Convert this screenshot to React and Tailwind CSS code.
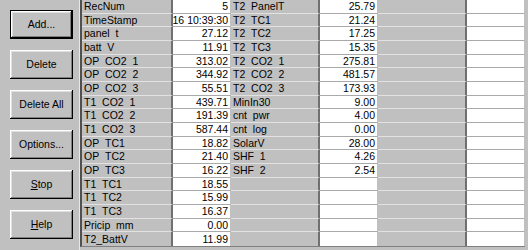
const rows = [
  ['RecNum', '5', 'T2_PanelT', '25.79'],
  ['TimeStamp', '16 10:39:30', 'T2_TC1', '21.24'],
  ['panel_t', '27.12', 'T2_TC2', '17.25'],
  ['batt_V', '11.91', 'T2_TC3', '15.35'],
  ['OP_CO2_1', '313.02', 'T2_CO2_1', '275.81'],
  ['OP_CO2_2', '344.92', 'T2_CO2_2', '481.57'],
  ['OP_CO2_3', '55.51', 'T2_CO2_3', '173.93'],
  ['T1_CO2_1', '439.71', 'MinIn30', '9.00'],
  ['T1_CO2_2', '191.39', 'cnt_pwr', '4.00'],
  ['T1_CO2_3', '587.44', 'cnt_log', '0.00'],
  ['OP_TC1', '18.82', 'SolarV', '28.00'],
  ['OP_TC2', '21.40', 'SHF_1', '4.26'],
  ['OP_TC3', '16.22', 'SHF_2', '2.54'],
  ['T1_TC1', '18.55', '', ''],
  ['T1_TC2', '15.99', '', ''],
  ['T1_TC3', '16.37', '', ''],
  ['Pricip_mm', '0.00', '', ''],
  ['T2_BattV', '11.99', '', ''],
]

const buttons = [
  { label: 'Add...', isDefault: true },
  { label: 'Delete' },
  { label: 'Delete All' },
  { label: 'Options...' },
  { label: 'Stop', key: 'S' },
  { label: 'Help', key: 'H' },
]

// underscores sit under the row line in the original grid, so they only show in the last row
function FieldName({ text, last }) {
  const parts = text.split('_')
  return parts.map((p, i) => (
    <span key={i}>
      {i > 0 && <span className={last ? '' : 'text-transparent'}>_</span>}
      {p}
    </span>
  ))
}

function LabelCell({ text, last }) {
  return (
    <div
      className={`flex items-center overflow-hidden whitespace-nowrap bg-[#c0c0c0] pl-[2px] border-r-2 border-r-[#707070] ${
        last ? '' : 'border-b border-b-[#e2e2e2]'
      }`}
    >
      {text && <FieldName text={text} last={last} />}
    </div>
  )
}

function ValueCell({ text, last }) {
  return (
    <div
      className={`flex items-center justify-end overflow-hidden whitespace-nowrap bg-white pr-[2px] border-r border-r-[#c0c0c0] ${
        last ? '' : 'border-b border-b-[#a9a9a9]'
      }`}
    >
      {text}
    </div>
  )
}

function WinButton({ label, isDefault, hotkey }) {
  const idx = hotkey ? label.indexOf(hotkey) : -1
  return (
    <button
      className={`w-[63px] h-[29px] bg-[#c0c0c0] text-black ${
        isDefault
          ? 'border border-black shadow-[inset_-1px_-1px_0_#000,inset_1px_1px_0_#fff,inset_-2px_-2px_0_#808080,inset_2px_2px_0_#dfdfdf]'
          : 'shadow-[inset_-1px_-1px_0_#000,inset_1px_1px_0_#fff,inset_-2px_-2px_0_#808080,inset_2px_2px_0_#dfdfdf]'
      }`}
    >
      {idx >= 0 ? (
        <>
          {label.slice(0, idx)}
          <span className="underline">{label[idx]}</span>
          {label.slice(idx + 1)}
        </>
      ) : (
        label
      )}
    </button>
  )
}

export default function App() {
  return (
    <div
      className="w-[528px] h-[250px] bg-[#c0c0c0] flex text-[10.5px] leading-none text-black overflow-hidden"
      style={{ fontFamily: '"Liberation Sans", Arial, sans-serif' }}
    >
      <div className="w-[80px] shrink-0 flex flex-col gap-[11px] pt-[10px] pl-[10px] border-r border-r-[#e8e8e8]">
        {buttons.map((b) => (
          <WinButton key={b.label} label={b.label} isDefault={b.isDefault} hotkey={b.key} />
        ))}
      </div>
      <div className="w-[445px] h-[247px] shrink-0 border-l-2 border-l-[#505050] border-b border-b-[#808080] border-r border-r-[#808080] grid grid-cols-[91px_58px_89px_58px_89px_58px] grid-rows-[repeat(18,minmax(0,1fr))]">
        {rows.map((r, i) => {
          const last = i === rows.length - 1
          return [
            <LabelCell key={`a${i}`} text={r[0]} last={last} />,
            <ValueCell key={`b${i}`} text={r[1]} last={last} />,
            <LabelCell key={`c${i}`} text={r[2]} last={last} />,
            <ValueCell key={`d${i}`} text={r[3]} last={last} />,
            <LabelCell key={`e${i}`} text="" last={last} />,
            <ValueCell key={`f${i}`} text="" last={last} />,
          ]
        })}
      </div>
    </div>
  )
}
